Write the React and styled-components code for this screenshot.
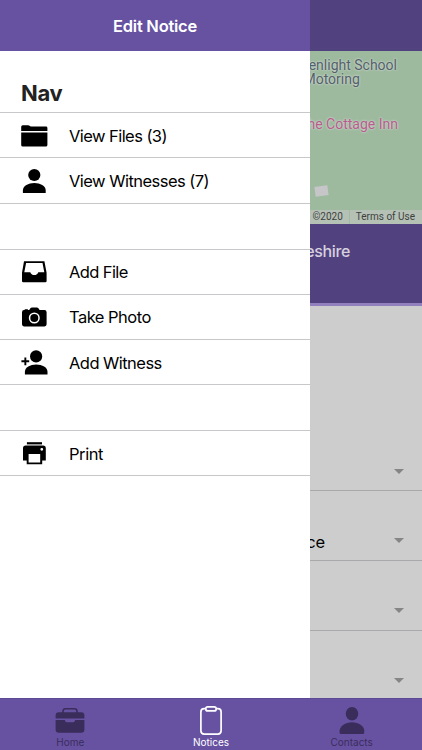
import React from 'react';
import styled, { createGlobalStyle } from 'styled-components';

const menuItems = [
  { label: 'View Files (3)', icon: FolderIcon, height: 45, spacing: -0.56, shift: 2 },
  { label: 'View Witnesses (7)', icon: PersonIcon, height: 46, spacing: -0.53 },
  { label: '', height: 46 },
  { label: 'Add File', icon: InboxIcon, height: 45, spacing: -0.6 },
  { label: 'Take Photo', icon: CameraIcon, height: 45, spacing: -0.52 },
  { label: 'Add Witness', icon: PersonAddIcon, height: 45, spacing: -0.54, shift: 1 },
  { label: '', height: 46 },
  { label: 'Print', icon: PrintIcon, height: 45, spacing: -0.42, shift: 1 },
];

const fields = [
  { value: '', height: 185, bottom: 16 },
  { value: 'Residence', height: 70, bottom: 17 },
  { value: '', height: 70, bottom: 17 },
  { value: '', height: 67, bottom: 15, last: true },
];

function App() {
  return (
    <>
      <GlobalStyle />
      <Screen>
        <Page>
          <PageHeader />
          <Map>
            <School>Greenlight School<br />of Motoring</School>
            <Inn>The Cottage Inn</Inn>
            <Building />
            <MapFooter>
              <span>©2020</span>
              <span>Terms of Use</span>
            </MapFooter>
          </Map>
          <Location>Cheshire</Location>
          <Form>
            {fields.map((field, i) => (
              <Field key={i} $height={field.height} $bottom={field.bottom} $last={field.last}>
                <FieldValue>{field.value}</FieldValue>
                <Caret />
              </Field>
            ))}
          </Form>
        </Page>
        <Drawer>
          <DrawerTitle>Nav</DrawerTitle>
          <Menu>
            {menuItems.map(({ label, icon: Icon, height, spacing, shift }, i) => (
              <MenuRow key={i} $height={height} $spacing={spacing} $shift={shift}>
                {Icon && <MenuIcon><Icon /></MenuIcon>}
                {label && <span>{label}</span>}
              </MenuRow>
            ))}
          </Menu>
        </Drawer>
        <DrawerHeader>Edit Notice</DrawerHeader>
        <TabBar>
          <Tab>
            <BriefcaseIcon />
            <span>Home</span>
          </Tab>
          <Tab $active>
            <ClipboardIcon />
            <span>Notices</span>
          </Tab>
          <Tab>
            <ContactIcon />
            <span>Contacts</span>
          </Tab>
        </TabBar>
      </Screen>
    </>
  );
}

export default App;

function FolderIcon() {
  return (
    <svg width="28" height="28" viewBox="0 0 28 28" fill="currentColor">
      <path d="M1.2 9V4.7Q1.2 3.2 2.7 3.2H8Q9 3.2 10 4.1Q10.6 4.6 11.6 4.6H26Q27.4 4.6 27.4 6V9Z" />
      <path d="M1.2 10.6H27.4V23Q27.4 24.6 25.8 24.6H2.8Q1.2 24.6 1.2 23Z" />
    </svg>
  );
}

function PersonIcon() {
  return (
    <svg width="28" height="28" viewBox="0 0 28 28" fill="currentColor">
      <circle cx="14.3" cy="8" r="6.1" />
      <path d="M2.9 26V23.5C2.9 18.8 8.4 16 14.3 16S25.7 18.8 25.7 23.5V26Z" />
    </svg>
  );
}

function InboxIcon() {
  return (
    <svg width="28" height="28" viewBox="0 0 28 28" fill="currentColor" fillRule="evenodd">
      <path d="M4 3.2H24.4L26.6 14.7V23.1Q26.6 24.3 25.4 24.3H3.2Q2 24.3 2 23.1V14.7ZM6.1 5L4.3 14.2H10.3C10.9 16 12.3 17.1 14.3 17.1S17.7 16 18.3 14.2H24.3L22.5 5Z" />
    </svg>
  );
}

function CameraIcon() {
  return (
    <svg width="28" height="28" viewBox="0 0 28 28" fill="currentColor" fillRule="evenodd">
      <path d="M4.7 6.9V6.2H7.9V7.1H9.2L10.6 5.1Q11.1 4.5 11.9 4.5H16.9Q17.7 4.5 18.2 5.1L19.6 7.1H24.5Q26.6 7.1 26.6 9.2V21.3Q26.6 23.4 24.5 23.4H4Q2 23.4 2 21.3V9.2Q2 7.1 4 7.1H4.7ZM14.3 9.5A5.5 5.5 0 1 0 14.3 20.5A5.5 5.5 0 1 0 14.3 9.5Z" />
      <circle cx="14.3" cy="15" r="4" />
    </svg>
  );
}

function PersonAddIcon() {
  return (
    <svg width="28" height="28" viewBox="0 0 28 28" fill="currentColor">
      <circle cx="16.1" cy="7.4" r="6.1" />
      <path d="M4.9 25.4V22.9C4.9 18.2 10.2 15.4 16.2 15.4S27.5 18.2 27.5 22.9V25.4Z" />
      <path d="M4.4 8.4H6.3V11.3H9.2V13.2H6.3V16.2H4.4V13.2H1.4V11.3H4.4Z" />
    </svg>
  );
}

function PrintIcon() {
  return (
    <svg width="28" height="28" viewBox="0 0 28 28" fill="currentColor" fillRule="evenodd">
      <path d="M6.9 2.2H22V4.4H6.9Z" />
      <path d="M5.7 5.5H23.1Q25.8 5.5 25.8 8.2V20.4H22.2V24.3H6.7V20.4H3V8.2Q3 5.5 5.7 5.5ZM8.6 14.1V22.4H20.2V14.1ZM21.8 7.9A1.4 1.4 0 1 0 21.8 10.7A1.4 1.4 0 1 0 21.8 7.9Z" />
    </svg>
  );
}

function BriefcaseIcon() {
  return (
    <svg width="30" height="30" viewBox="0 0 30 30" fill="currentColor">
      <path d="M8 7V5.3Q8 2.7 10.6 2.7H19.4Q22 2.7 22 5.3V7" fill="none" stroke="currentColor" strokeWidth="1.6" />
      <path d="M3.8 6.2H26.2Q29.4 6.2 29.4 9.4V12.4H.6V9.4Q.6 6.2 3.8 6.2Z" />
      <path d="M.6 14H9.8Q10.2 16.2 11.8 16.2H18.2Q19.8 16.2 20.2 14H29.4V23.5Q29.4 26.7 26.2 26.7H3.8Q.6 26.7.6 23.5Z" />
    </svg>
  );
}

function ClipboardIcon() {
  return (
    <svg width="30" height="30" viewBox="0 0 30 30" fill="none" stroke="currentColor" strokeWidth="1.7">
      <path d="M9.6 2.6H8.2Q4.9 2.6 4.9 5.9V24.8Q4.9 28.1 8.2 28.1H21.8Q25.1 28.1 25.1 24.8V5.9Q25.1 2.6 21.8 2.6H20.4" />
      <rect x="9.8" y=".9" width="10.4" height="4" rx="2" />
    </svg>
  );
}

function ContactIcon() {
  return (
    <svg width="30" height="30" viewBox="0 0 30 30" fill="currentColor">
      <ellipse cx="15" cy="7.7" rx="6.3" ry="6.8" />
      <path d="M2.6 27C1.5 20 8.8 16.3 15 16.3S28.5 20 27.2 27Q27 27.9 26 27.9H3.8Q2.8 27.9 2.6 27Z" />
    </svg>
  );
}

const GlobalStyle = createGlobalStyle`
  * {
    box-sizing: border-box;
  }
  body {
    margin: 0;
    font-family: Inter, "Liberation Sans", sans-serif;
    color: #000;
  }
`;
const Screen = styled.div`
  position: relative;
  width: 422px;
  height: 750px;
  overflow: hidden;
  display: flex;
  flex-direction: column;
`;
const Page = styled.main`
  flex: 1;
  display: flex;
  flex-direction: column;
  background: #cdcdcd;
  overflow: hidden;
`;
const PageHeader = styled.div`
  flex: 0 0 51px;
  background: #52417f;
`;
const Map = styled.section`
  position: relative;
  flex: 0 0 173px;
  background: #9dba9f;
  font-family: Roboto, sans-serif;
`;
const MapLabel = styled.div`
  position: absolute;
  font-size: 14px;
  line-height: 14.4px;
  white-space: nowrap;
  text-shadow: 0 0 2px #d1d8d0, 0 0 2px #d1d8d0;
`;
const School = styled(MapLabel)`
  right: 25px;
  top: 7px;
  color: #53616a;
`;
const Inn = styled(MapLabel)`
  right: 24px;
  top: 66px;
  color: #b85c8c;
`;
const Building = styled.div`
  position: absolute;
  left: 315px;
  top: 135px;
  width: 13px;
  height: 10px;
  background: #c6c6c8;
  transform: rotate(-8deg);
`;
const MapFooter = styled.div`
  position: absolute;
  right: 0;
  bottom: 0;
  display: flex;
  height: 14px;
  padding-right: 1px;
  background: #b6c1b6;
  color: #3d423e;
  font-size: 10px;
  line-height: 14px;
  span {
    padding: 0 6px;
  }
  span + span {
    border-left: 1px solid #a4b8a4;
  }
`;
const Location = styled.section`
  flex: 0 0 82px;
  padding: 17px 72px 0 0;
  background: #52417f;
  border-bottom: 3px solid #9180bd;
  color: #d6d1df;
  font-size: 16px;
  font-weight: 500;
  line-height: 20px;
  letter-spacing: -0.35px;
  text-align: right;
`;
const Form = styled.section`
  display: flex;
  flex-direction: column;
`;
const Field = styled.div`
  flex: 0 0 ${({ $height }) => $height}px;
  display: flex;
  justify-content: space-between;
  align-items: flex-end;
  padding: 0 18px ${({ $bottom }) => $bottom}px 247px;
  border-bottom: ${({ $last }) => ($last ? 0 : 1)}px solid #a9a9ab;
`;
const FieldValue = styled.span`
  font-size: 16.5px;
  line-height: 20px;
  letter-spacing: -0.4px;
  margin-bottom: -9px;
`;
const Caret = styled.i`
  border-left: 5px solid transparent;
  border-right: 5px solid transparent;
  border-top: 5px solid #858585;
`;
const Drawer = styled.aside`
  position: absolute;
  left: 0;
  top: 51px;
  width: 310px;
  height: 647px;
  background: #fff;
`;
const DrawerHeader = styled.header`
  position: absolute;
  left: 0;
  top: 0;
  width: 310px;
  height: 51px;
  background: #6752a2;
  color: #fff;
  font-size: 16.5px;
  font-weight: 600;
  letter-spacing: -0.25px;
  line-height: 52px;
  text-align: center;
`;
const DrawerTitle = styled.h2`
  height: 61px;
  margin: 0;
  padding: 28px 0 0 21px;
  color: #222;
  font-size: 22px;
  font-weight: 700;
  line-height: 29px;
  letter-spacing: -0.3px;
`;
const Menu = styled.div`
  border-top: 1px solid #c8c8cb;
`;
const MenuRow = styled.div`
  display: flex;
  align-items: center;
  height: ${({ $height }) => $height}px;
  padding: ${({ $shift }) => $shift || 0}px 0 0 20px;
  border-bottom: 1px solid #c8c8cb;
  font-size: 16.5px;
  letter-spacing: ${({ $spacing }) => $spacing || 0}px;
`;
const MenuIcon = styled.div`
  width: 49px;
  height: 28px;
`;
const TabBar = styled.nav`
  flex: 0 0 52px;
  display: flex;
  background: #6752a2;
  border-top: 1px solid #5d4996;
`;
const Tab = styled.div`
  flex: 1;
  display: flex;
  flex-direction: column;
  align-items: center;
  padding-top: 7px;
  color: ${({ $active }) => ($active ? '#fff' : '#3a2d5c')};
  font-size: 10px;
  line-height: 12px;
`;
